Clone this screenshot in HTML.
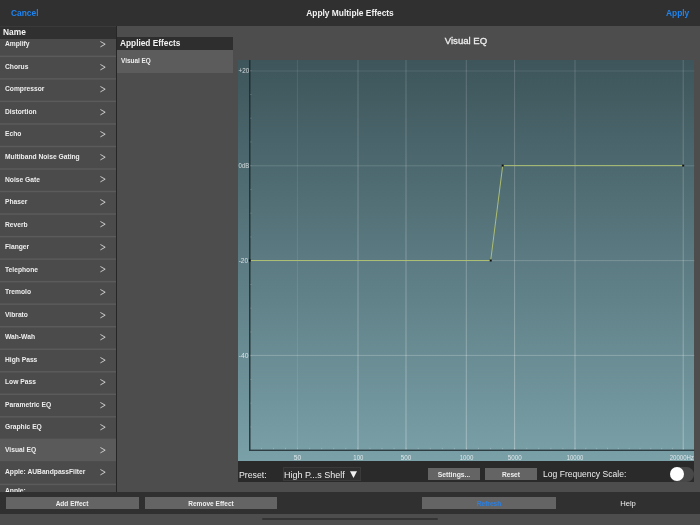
<!DOCTYPE html>
<html><head><meta charset="utf-8">
<style>
*{margin:0;padding:0;box-sizing:border-box}
html,body{width:700px;height:525px;overflow:hidden;background:#4d4d4d;font-family:"Liberation Sans",sans-serif;position:relative}
.r{position:absolute}
.t{position:absolute;line-height:1;white-space:nowrap;will-change:transform}
svg text{font-family:"Liberation Sans",sans-serif}
</style></head><body>
<div class="r" style="left:0px;top:0px;width:700px;height:26px;background:#303030;"></div>
<div class="t" style="left:10.90px;top:8.99px;font-size:8.4px;color:#1e84f0;font-weight:bold;">Cancel</div>
<div class="t" style="left:50.00px;width:600px;text-align:center;top:9.49px;font-size:8.4px;color:#f2f2f2;font-weight:bold;">Apply Multiple Effects</div>
<div class="t" style="left:665.90px;top:8.79px;font-size:8.4px;color:#1e84f0;font-weight:bold;">Apply</div>
<div class="r" style="left:0;top:26px;width:116px;height:466px;overflow:hidden;background:#4b4b4b"><svg class="r" style="left:0;top:0" width="116" height="466"><rect x="0" y="29.60" width="116" height="1.5" fill="#5b5b5b"/><rect x="0" y="52.13" width="116" height="1.5" fill="#5b5b5b"/><rect x="0" y="74.66" width="116" height="1.5" fill="#5b5b5b"/><rect x="0" y="97.19" width="116" height="1.5" fill="#5b5b5b"/><rect x="0" y="119.72" width="116" height="1.5" fill="#5b5b5b"/><rect x="0" y="142.25" width="116" height="1.5" fill="#5b5b5b"/><rect x="0" y="164.78" width="116" height="1.5" fill="#5b5b5b"/><rect x="0" y="187.31" width="116" height="1.5" fill="#5b5b5b"/><rect x="0" y="209.84" width="116" height="1.5" fill="#5b5b5b"/><rect x="0" y="232.37" width="116" height="1.5" fill="#5b5b5b"/><rect x="0" y="254.90" width="116" height="1.5" fill="#5b5b5b"/><rect x="0" y="277.43" width="116" height="1.5" fill="#5b5b5b"/><rect x="0" y="299.96" width="116" height="1.5" fill="#5b5b5b"/><rect x="0" y="322.49" width="116" height="1.5" fill="#5b5b5b"/><rect x="0" y="345.02" width="116" height="1.5" fill="#5b5b5b"/><rect x="0" y="367.55" width="116" height="1.5" fill="#5b5b5b"/><rect x="0" y="390.08" width="116" height="1.5" fill="#5b5b5b"/><rect x="0" y="457.67" width="116" height="1.5" fill="#5b5b5b"/><rect x="0" y="480.20" width="116" height="1.5" fill="#5b5b5b"/><rect x="0" y="412.61" width="116" height="22.53" fill="#5a5a5a"/></svg>
<div class="t" style="left:4.50px;top:15.35px;font-size:6.7px;color:#eee;font-weight:bold;">Amplify</div>
<svg class="r" style="left:100.2px;top:15.17px" width="6" height="7" viewBox="0 0 6 7"><path d="M0.4 0.5 L5.2 3.2 L0.4 5.9" fill="none" stroke="#dedede" stroke-width="0.85"/></svg>
<div class="t" style="left:4.50px;top:37.88px;font-size:6.7px;color:#eee;font-weight:bold;">Chorus</div>
<svg class="r" style="left:100.2px;top:37.70px" width="6" height="7" viewBox="0 0 6 7"><path d="M0.4 0.5 L5.2 3.2 L0.4 5.9" fill="none" stroke="#dedede" stroke-width="0.85"/></svg>
<div class="t" style="left:4.50px;top:60.41px;font-size:6.7px;color:#eee;font-weight:bold;">Compressor</div>
<svg class="r" style="left:100.2px;top:60.23px" width="6" height="7" viewBox="0 0 6 7"><path d="M0.4 0.5 L5.2 3.2 L0.4 5.9" fill="none" stroke="#dedede" stroke-width="0.85"/></svg>
<div class="t" style="left:4.50px;top:82.94px;font-size:6.7px;color:#eee;font-weight:bold;">Distortion</div>
<svg class="r" style="left:100.2px;top:82.76px" width="6" height="7" viewBox="0 0 6 7"><path d="M0.4 0.5 L5.2 3.2 L0.4 5.9" fill="none" stroke="#dedede" stroke-width="0.85"/></svg>
<div class="t" style="left:4.50px;top:105.47px;font-size:6.7px;color:#eee;font-weight:bold;">Echo</div>
<svg class="r" style="left:100.2px;top:105.29px" width="6" height="7" viewBox="0 0 6 7"><path d="M0.4 0.5 L5.2 3.2 L0.4 5.9" fill="none" stroke="#dedede" stroke-width="0.85"/></svg>
<div class="t" style="left:4.50px;top:128.00px;font-size:6.7px;color:#eee;font-weight:bold;">Multiband Noise Gating</div>
<svg class="r" style="left:100.2px;top:127.82px" width="6" height="7" viewBox="0 0 6 7"><path d="M0.4 0.5 L5.2 3.2 L0.4 5.9" fill="none" stroke="#dedede" stroke-width="0.85"/></svg>
<div class="t" style="left:4.50px;top:150.53px;font-size:6.7px;color:#eee;font-weight:bold;">Noise Gate</div>
<svg class="r" style="left:100.2px;top:150.35px" width="6" height="7" viewBox="0 0 6 7"><path d="M0.4 0.5 L5.2 3.2 L0.4 5.9" fill="none" stroke="#dedede" stroke-width="0.85"/></svg>
<div class="t" style="left:4.50px;top:173.06px;font-size:6.7px;color:#eee;font-weight:bold;">Phaser</div>
<svg class="r" style="left:100.2px;top:172.88px" width="6" height="7" viewBox="0 0 6 7"><path d="M0.4 0.5 L5.2 3.2 L0.4 5.9" fill="none" stroke="#dedede" stroke-width="0.85"/></svg>
<div class="t" style="left:4.50px;top:195.59px;font-size:6.7px;color:#eee;font-weight:bold;">Reverb</div>
<svg class="r" style="left:100.2px;top:195.41px" width="6" height="7" viewBox="0 0 6 7"><path d="M0.4 0.5 L5.2 3.2 L0.4 5.9" fill="none" stroke="#dedede" stroke-width="0.85"/></svg>
<div class="t" style="left:4.50px;top:218.12px;font-size:6.7px;color:#eee;font-weight:bold;">Flanger</div>
<svg class="r" style="left:100.2px;top:217.94px" width="6" height="7" viewBox="0 0 6 7"><path d="M0.4 0.5 L5.2 3.2 L0.4 5.9" fill="none" stroke="#dedede" stroke-width="0.85"/></svg>
<div class="t" style="left:4.50px;top:240.65px;font-size:6.7px;color:#eee;font-weight:bold;">Telephone</div>
<svg class="r" style="left:100.2px;top:240.47px" width="6" height="7" viewBox="0 0 6 7"><path d="M0.4 0.5 L5.2 3.2 L0.4 5.9" fill="none" stroke="#dedede" stroke-width="0.85"/></svg>
<div class="t" style="left:4.50px;top:263.18px;font-size:6.7px;color:#eee;font-weight:bold;">Tremolo</div>
<svg class="r" style="left:100.2px;top:263.00px" width="6" height="7" viewBox="0 0 6 7"><path d="M0.4 0.5 L5.2 3.2 L0.4 5.9" fill="none" stroke="#dedede" stroke-width="0.85"/></svg>
<div class="t" style="left:4.50px;top:285.71px;font-size:6.7px;color:#eee;font-weight:bold;">Vibrato</div>
<svg class="r" style="left:100.2px;top:285.53px" width="6" height="7" viewBox="0 0 6 7"><path d="M0.4 0.5 L5.2 3.2 L0.4 5.9" fill="none" stroke="#dedede" stroke-width="0.85"/></svg>
<div class="t" style="left:4.50px;top:308.24px;font-size:6.7px;color:#eee;font-weight:bold;">Wah-Wah</div>
<svg class="r" style="left:100.2px;top:308.06px" width="6" height="7" viewBox="0 0 6 7"><path d="M0.4 0.5 L5.2 3.2 L0.4 5.9" fill="none" stroke="#dedede" stroke-width="0.85"/></svg>
<div class="t" style="left:4.50px;top:330.77px;font-size:6.7px;color:#eee;font-weight:bold;">High Pass</div>
<svg class="r" style="left:100.2px;top:330.59px" width="6" height="7" viewBox="0 0 6 7"><path d="M0.4 0.5 L5.2 3.2 L0.4 5.9" fill="none" stroke="#dedede" stroke-width="0.85"/></svg>
<div class="t" style="left:4.50px;top:353.30px;font-size:6.7px;color:#eee;font-weight:bold;">Low Pass</div>
<svg class="r" style="left:100.2px;top:353.12px" width="6" height="7" viewBox="0 0 6 7"><path d="M0.4 0.5 L5.2 3.2 L0.4 5.9" fill="none" stroke="#dedede" stroke-width="0.85"/></svg>
<div class="t" style="left:4.50px;top:375.83px;font-size:6.7px;color:#eee;font-weight:bold;">Parametric EQ</div>
<svg class="r" style="left:100.2px;top:375.65px" width="6" height="7" viewBox="0 0 6 7"><path d="M0.4 0.5 L5.2 3.2 L0.4 5.9" fill="none" stroke="#dedede" stroke-width="0.85"/></svg>
<div class="t" style="left:4.50px;top:398.36px;font-size:6.7px;color:#eee;font-weight:bold;">Graphic EQ</div>
<svg class="r" style="left:100.2px;top:398.18px" width="6" height="7" viewBox="0 0 6 7"><path d="M0.4 0.5 L5.2 3.2 L0.4 5.9" fill="none" stroke="#dedede" stroke-width="0.85"/></svg>
<div class="t" style="left:4.50px;top:420.89px;font-size:6.7px;color:#eee;font-weight:bold;">Visual EQ</div>
<svg class="r" style="left:100.2px;top:420.71px" width="6" height="7" viewBox="0 0 6 7"><path d="M0.4 0.5 L5.2 3.2 L0.4 5.9" fill="none" stroke="#dedede" stroke-width="0.85"/></svg>
<div class="t" style="left:4.50px;top:443.42px;font-size:6.7px;color:#eee;font-weight:bold;">Apple: AUBandpassFilter</div>
<svg class="r" style="left:100.2px;top:443.24px" width="6" height="7" viewBox="0 0 6 7"><path d="M0.4 0.5 L5.2 3.2 L0.4 5.9" fill="none" stroke="#dedede" stroke-width="0.85"/></svg>
<div class="t" style="left:4.50px;top:461.95px;font-size:6.7px;color:#eee;font-weight:bold;">Apple:</div>
<svg class="r" style="left:100.2px;top:465.77px" width="6" height="7" viewBox="0 0 6 7"><path d="M0.4 0.5 L5.2 3.2 L0.4 5.9" fill="none" stroke="#dedede" stroke-width="0.85"/></svg></div>
<div class="r" style="left:0px;top:26px;width:116px;height:12.6px;background:#303030;"></div>
<div class="r" style="left:0px;top:26px;width:116px;height:1.1px;background:#3a3a3a;"></div>
<div class="r" style="left:116px;top:26px;width:1.3px;height:466px;background:#262626;"></div>
<div class="t" style="left:2.50px;top:28.14px;font-size:8.4px;color:#f4f4f4;font-weight:bold;">Name</div>
<div class="r" style="left:117px;top:37.4px;width:116px;height:12.2px;background:#2e2e2e;"></div>
<div class="t" style="left:119.60px;top:39.37px;font-size:8.3px;color:#f4f4f4;font-weight:bold;">Applied Effects</div>
<div class="r" style="left:117px;top:49.6px;width:116px;height:23px;background:#5c5c5c;"></div>
<div class="t" style="left:121.40px;top:57.58px;font-size:6.4px;color:#eee;font-weight:bold;">Visual EQ</div>
<div class="t" style="left:166.40px;width:600px;text-align:center;top:35.87px;font-size:9.6px;color:#eee;font-weight:normal;-webkit-text-stroke:0.3px #eee;">Visual EQ</div>
<div class="r" style="left:238px;top:60px;width:456.3px;height:401px;background:linear-gradient(#3d555b,#7aa0a8);"></div>
<svg class="r" style="left:0;top:0;will-change:transform" width="700" height="525"><defs><linearGradient id="vg" x1="0" y1="0" x2="0" y2="1"><stop offset="0" stop-color="#fff" stop-opacity="0.16"/><stop offset="1" stop-color="#fff" stop-opacity="0.32"/></linearGradient><linearGradient id="vg50" x1="0" y1="0" x2="0" y2="1"><stop offset="0" stop-color="#fff" stop-opacity="0.09"/><stop offset="1" stop-color="#fff" stop-opacity="0.10"/></linearGradient></defs>
<rect x="249.8" y="70.50" width="444.49999999999994" height="1" fill="rgba(255,255,255,0.105)"/>
<text x="238.50" y="73.15" font-size="7" textLength="10.70" lengthAdjust="spacingAndGlyphs" fill="rgba(255,255,255,0.75)">+20</text>
<rect x="249.8" y="165.30" width="444.49999999999994" height="1" fill="rgba(255,255,255,0.146)"/>
<text x="238.50" y="167.95" font-size="7" textLength="10.70" lengthAdjust="spacingAndGlyphs" fill="rgba(255,255,255,0.75)">0dB</text>
<rect x="249.8" y="260.10" width="444.49999999999994" height="1" fill="rgba(255,255,255,0.187)"/>
<text x="238.70" y="262.75" font-size="7" textLength="9.40" lengthAdjust="spacingAndGlyphs" fill="rgba(255,255,255,0.75)">-20</text>
<rect x="249.8" y="354.90" width="444.49999999999994" height="1" fill="rgba(255,255,255,0.229)"/>
<text x="238.80" y="357.55" font-size="7" textLength="9.80" lengthAdjust="spacingAndGlyphs" fill="rgba(255,255,255,0.75)">-40</text>
<rect x="296.90" y="60" width="1" height="390" fill="url(#vg50)"/>
<text x="293.70" y="459.8" font-size="7" textLength="7.50" lengthAdjust="spacingAndGlyphs" fill="rgba(255,255,255,0.75)">50</text>
<rect x="357.50" y="60" width="1" height="390" fill="url(#vg)"/>
<text x="353.30" y="459.8" font-size="7" textLength="10.00" lengthAdjust="spacingAndGlyphs" fill="rgba(255,255,255,0.75)">100</text>
<rect x="405.50" y="60" width="1" height="390" fill="url(#vg)"/>
<text x="400.70" y="459.8" font-size="7" textLength="10.60" lengthAdjust="spacingAndGlyphs" fill="rgba(255,255,255,0.75)">500</text>
<rect x="465.80" y="60" width="1" height="390" fill="url(#vg)"/>
<text x="459.70" y="459.8" font-size="7" textLength="13.60" lengthAdjust="spacingAndGlyphs" fill="rgba(255,255,255,0.75)">1000</text>
<rect x="514.10" y="60" width="1" height="390" fill="url(#vg)"/>
<text x="507.70" y="459.8" font-size="7" textLength="14.00" lengthAdjust="spacingAndGlyphs" fill="rgba(255,255,255,0.75)">5000</text>
<rect x="574.50" y="60" width="1" height="390" fill="url(#vg)"/>
<text x="566.70" y="459.8" font-size="7" textLength="16.60" lengthAdjust="spacingAndGlyphs" fill="rgba(255,255,255,0.75)">10000</text>
<rect x="682.70" y="60" width="1" height="390" fill="url(#vg)"/>
<text x="669.70" y="459.8" font-size="7" textLength="24.20" lengthAdjust="spacingAndGlyphs" fill="rgba(255,255,255,0.75)">20000Hz</text>
<line x1="249.8" y1="70.70" x2="251.3" y2="70.70" stroke="rgba(255,255,255,0.4)" stroke-width="0.8"/>
<line x1="249.8" y1="94.45" x2="251.3" y2="94.45" stroke="rgba(255,255,255,0.4)" stroke-width="0.8"/>
<line x1="249.8" y1="118.20" x2="251.3" y2="118.20" stroke="rgba(255,255,255,0.4)" stroke-width="0.8"/>
<line x1="249.8" y1="141.95" x2="251.3" y2="141.95" stroke="rgba(255,255,255,0.4)" stroke-width="0.8"/>
<line x1="249.8" y1="165.70" x2="251.3" y2="165.70" stroke="rgba(255,255,255,0.4)" stroke-width="0.8"/>
<line x1="249.8" y1="189.45" x2="251.3" y2="189.45" stroke="rgba(255,255,255,0.4)" stroke-width="0.8"/>
<line x1="249.8" y1="213.20" x2="251.3" y2="213.20" stroke="rgba(255,255,255,0.4)" stroke-width="0.8"/>
<line x1="249.8" y1="236.95" x2="251.3" y2="236.95" stroke="rgba(255,255,255,0.4)" stroke-width="0.8"/>
<line x1="249.8" y1="260.70" x2="251.3" y2="260.70" stroke="rgba(255,255,255,0.4)" stroke-width="0.8"/>
<line x1="249.8" y1="284.45" x2="251.3" y2="284.45" stroke="rgba(255,255,255,0.4)" stroke-width="0.8"/>
<line x1="249.8" y1="308.20" x2="251.3" y2="308.20" stroke="rgba(255,255,255,0.4)" stroke-width="0.8"/>
<line x1="249.8" y1="331.95" x2="251.3" y2="331.95" stroke="rgba(255,255,255,0.4)" stroke-width="0.8"/>
<line x1="249.8" y1="355.70" x2="251.3" y2="355.70" stroke="rgba(255,255,255,0.4)" stroke-width="0.8"/>
<line x1="249.8" y1="379.45" x2="251.3" y2="379.45" stroke="rgba(255,255,255,0.4)" stroke-width="0.8"/>
<line x1="249.8" y1="403.20" x2="251.3" y2="403.20" stroke="rgba(255,255,255,0.4)" stroke-width="0.8"/>
<line x1="249.8" y1="426.95" x2="251.3" y2="426.95" stroke="rgba(255,255,255,0.4)" stroke-width="0.8"/>
<rect x="260.90" y="447.8" width="1" height="1.6" fill="rgba(255,255,255,0.22)"/>
<rect x="272.96" y="447.8" width="1" height="1.6" fill="rgba(255,255,255,0.22)"/>
<rect x="285.02" y="447.8" width="1" height="1.6" fill="rgba(255,255,255,0.22)"/>
<rect x="297.08" y="447.8" width="1" height="1.6" fill="rgba(255,255,255,0.22)"/>
<rect x="309.15" y="447.8" width="1" height="1.6" fill="rgba(255,255,255,0.22)"/>
<rect x="321.21" y="447.8" width="1" height="1.6" fill="rgba(255,255,255,0.22)"/>
<rect x="333.27" y="447.8" width="1" height="1.6" fill="rgba(255,255,255,0.22)"/>
<rect x="345.33" y="447.8" width="1" height="1.6" fill="rgba(255,255,255,0.22)"/>
<rect x="357.39" y="447.8" width="1" height="1.6" fill="rgba(255,255,255,0.22)"/>
<rect x="369.45" y="447.8" width="1" height="1.6" fill="rgba(255,255,255,0.22)"/>
<rect x="381.52" y="447.8" width="1" height="1.6" fill="rgba(255,255,255,0.22)"/>
<rect x="393.58" y="447.8" width="1" height="1.6" fill="rgba(255,255,255,0.22)"/>
<rect x="405.64" y="447.8" width="1" height="1.6" fill="rgba(255,255,255,0.22)"/>
<rect x="417.70" y="447.8" width="1" height="1.6" fill="rgba(255,255,255,0.22)"/>
<rect x="429.76" y="447.8" width="1" height="1.6" fill="rgba(255,255,255,0.22)"/>
<rect x="441.82" y="447.8" width="1" height="1.6" fill="rgba(255,255,255,0.22)"/>
<rect x="453.88" y="447.8" width="1" height="1.6" fill="rgba(255,255,255,0.22)"/>
<rect x="465.95" y="447.8" width="1" height="1.6" fill="rgba(255,255,255,0.22)"/>
<rect x="478.01" y="447.8" width="1" height="1.6" fill="rgba(255,255,255,0.22)"/>
<rect x="490.07" y="447.8" width="1" height="1.6" fill="rgba(255,255,255,0.22)"/>
<rect x="502.13" y="447.8" width="1" height="1.6" fill="rgba(255,255,255,0.22)"/>
<rect x="514.19" y="447.8" width="1" height="1.6" fill="rgba(255,255,255,0.22)"/>
<rect x="526.25" y="447.8" width="1" height="1.6" fill="rgba(255,255,255,0.22)"/>
<rect x="538.32" y="447.8" width="1" height="1.6" fill="rgba(255,255,255,0.22)"/>
<rect x="550.38" y="447.8" width="1" height="1.6" fill="rgba(255,255,255,0.22)"/>
<rect x="562.44" y="447.8" width="1" height="1.6" fill="rgba(255,255,255,0.22)"/>
<rect x="574.50" y="447.8" width="1" height="1.6" fill="rgba(255,255,255,0.22)"/>
<rect x="585.33" y="447.8" width="1" height="1.6" fill="rgba(255,255,255,0.22)"/>
<rect x="596.16" y="447.8" width="1" height="1.6" fill="rgba(255,255,255,0.22)"/>
<rect x="606.99" y="447.8" width="1" height="1.6" fill="rgba(255,255,255,0.22)"/>
<rect x="617.82" y="447.8" width="1" height="1.6" fill="rgba(255,255,255,0.22)"/>
<rect x="628.65" y="447.8" width="1" height="1.6" fill="rgba(255,255,255,0.22)"/>
<rect x="639.48" y="447.8" width="1" height="1.6" fill="rgba(255,255,255,0.22)"/>
<rect x="650.31" y="447.8" width="1" height="1.6" fill="rgba(255,255,255,0.22)"/>
<rect x="661.14" y="447.8" width="1" height="1.6" fill="rgba(255,255,255,0.22)"/>
<rect x="671.97" y="447.8" width="1" height="1.6" fill="rgba(255,255,255,0.22)"/>
<rect x="682.80" y="447.8" width="1" height="1.6" fill="rgba(255,255,255,0.22)"/>
<rect x="249.15" y="60" width="1.3" height="391" fill="#1e2a2d"/>
<rect x="249.3" y="449.6" width="444.99999999999994" height="1.4" fill="#2e3e42"/>
<path d="M249.8,260.5 L490.7,260.5 L502.7,165.6 L683.2,165.6" fill="none" stroke="#acbd74" stroke-width="1"/>
<rect x="248.8" y="259.5" width="2" height="2" fill="#111"/>
<rect x="489.7" y="259.5" width="2" height="2" fill="#111"/>
<rect x="501.7" y="164.6" width="2" height="2" fill="#111"/>
<rect x="682.2" y="164.6" width="2" height="2" fill="#111"/></svg>
<div class="r" style="left:238px;top:461px;width:456.3px;height:20.6px;overflow:hidden;background:#2a2a2a"><div class="r" style="left:431.5px;top:5.5px;width:24.8px;height:15px;background:#484848;border-radius:7.5px;"></div><div class="r" style="left:432px;top:6px;width:14px;height:14px;background:#fff;border-radius:7px;"></div></div>
<div class="t" style="left:238.60px;top:470.79px;font-size:8.75px;color:#eee;font-weight:normal;">Preset:</div>
<div class="r" style="left:282.9px;top:467.1px;width:78.6px;height:14.4px;background:#2e2e2e;border:0.6px solid #3a3a3a;"></div>
<div class="t" style="left:284.20px;top:470.58px;font-size:9.0px;color:#eee;font-weight:normal;">High P...s Shelf</div>
<svg class="r" style="left:350.3px;top:470.9px" width="8" height="8" viewBox="0 0 8 8"><path d="M0 0.3 L7 0.3 L3.5 7 Z" fill="#eee"/></svg>
<div class="r" style="left:428px;top:468px;width:52px;height:12px;background:#646464;"></div>
<div class="t" style="left:154.00px;width:600px;text-align:center;top:471.54px;font-size:6.8px;color:#eee;font-weight:bold;">Settings...</div>
<div class="r" style="left:485.4px;top:468px;width:51.6px;height:12px;background:#646464;"></div>
<div class="t" style="left:211.20px;width:600px;text-align:center;top:471.71px;font-size:6.6px;color:#eee;font-weight:bold;">Reset</div>
<div class="t" style="left:542.80px;top:470.45px;font-size:8.57px;color:#eee;font-weight:normal;">Log Frequency Scale:</div>
<div class="r" style="left:0px;top:492px;width:700px;height:21.6px;background:#303030;"></div>
<div class="r" style="left:6px;top:497px;width:132.6px;height:12.4px;background:#646464;"></div>
<div class="t" style="left:-227.70px;width:600px;text-align:center;top:500.55px;font-size:6.56px;color:#eee;font-weight:bold;">Add Effect</div>
<div class="r" style="left:145px;top:497px;width:132.4px;height:12.4px;background:#646464;"></div>
<div class="t" style="left:-88.80px;width:600px;text-align:center;top:500.75px;font-size:6.56px;color:#eee;font-weight:bold;">Remove Effect</div>
<div class="r" style="left:422px;top:497px;width:133.6px;height:12.4px;background:#646464;"></div>
<div class="t" style="left:188.80px;width:600px;text-align:center;top:500.75px;font-size:6.56px;color:#2a7fe0;font-weight:bold;">Refresh</div>
<div class="t" style="left:328.00px;width:600px;text-align:center;top:499.64px;font-size:7.63px;color:#eee;font-weight:normal;">Help</div>
<div class="r" style="left:262px;top:518.2px;width:176px;height:2.2px;background:#343434;border-radius:1.1px;"></div>
</body></html>
